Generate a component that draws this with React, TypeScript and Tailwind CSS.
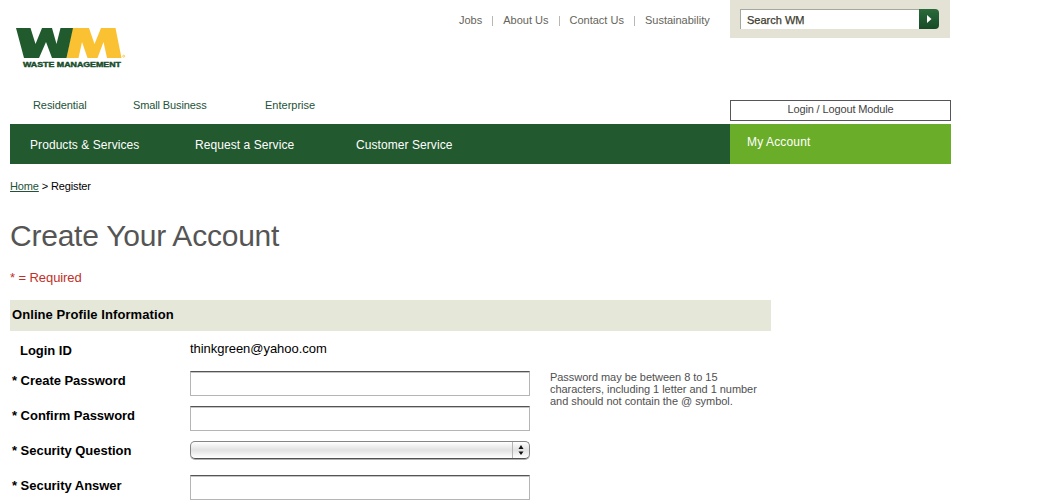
import type { ReactNode } from 'react';

function Logo() {
  return (
    <svg width="112" height="42" viewBox="0 0 112 42" role="img" aria-label="Waste Management">
      <path d="M57.5 0H74L79.5 16L86 0H100.5L106.5 30H92L88.5 14L82.5 30H72.5L67 14L63.5 30H51.5Z" fill="#fac232" />
      <path d="M1 0H15.5L20.5 16L27 0H37L41.500 16L45.500 0H58L51.500 30H37L31 14L24 30H9Z" fill="#205a2d" />
      <circle cx="108.700" cy="28.200" r="1" fill="none" stroke="#fac232" strokeWidth="0.8" />
      <text x="8" y="38.800" fontFamily="Liberation Sans, sans-serif" fontSize="6.8" fontWeight="700" textLength="98" lengthAdjust="spacingAndGlyphs" fill="#174d2b" stroke="#174d2b" strokeWidth="0.4">WASTE MANAGEMENT</text>
    </svg>
  );
}

function Field({ label, indent = 'pl-[2px]', height = 'h-[35px]', children }: { label: string; indent?: string; height?: string; children: ReactNode }) {
  return (
    <div className={`flex items-start ${height}`}>
      <label className={`w-[180px] shrink-0 whitespace-nowrap pt-[2px] text-[13px] font-bold leading-[15px] tracking-[-0.03px] ${indent}`}>{label}</label>
      {children}
    </div>
  );
}

const input =
  'h-[25px] w-[340px] border border-[#b5b5b5] border-t-[#555] bg-white px-1 text-[13px] shadow-[inset_0_1px_0_#c4c4c4] outline-none';

export default function App() {
  return (
    <div className="h-[502px] w-[1059px] overflow-hidden bg-white pl-[10px] font-['Liberation_Sans',Arial,sans-serif] text-black">
      <header className="w-[941px]">
        <div className="flex h-[99px] items-start">
          <div className="w-[449px] pl-[5px] pt-[28px]"><Logo /></div>
          <nav className="flex w-[271px] items-center pt-[14px] text-[11px] leading-[13px] text-[#65645a]">
            <span>Jobs</span>
            <i className="ml-[10px] mr-[10px] h-[10px] w-px bg-[#b8b8b0]" />
            <span>About Us</span>
            <i className="ml-[10px] mr-[10px] h-[10px] w-px bg-[#b8b8b0]" />
            <span>Contact Us</span>
            <i className="ml-[10px] mr-[10px] h-[10px] w-px bg-[#b8b8b0]" />
            <span>Sustainability</span>
          </nav>
          <div className="flex h-[38px] w-[220px] items-start bg-[#e4e1d5] pl-[10px] pt-[9px]">
            <div className="h-[20px] w-[179px] border-l border-t border-[#a5a89e] bg-white pl-[6px] text-[11px] leading-[21px] text-[#3d3c2c] [-webkit-text-stroke:0.25px_#3d3c2c]">Search WM</div>
            <button type="button" aria-label="Search" className="flex h-[20px] w-[20px] items-center justify-center rounded-r-[4px] bg-linear-to-b from-[#2a6b3b] to-[#164a27]">
              <svg width="5" height="8" viewBox="0 0 5 8"><path d="M0 0L4.5 4L0 8Z" fill="#fff" /></svg>
            </button>
          </div>
        </div>
        <div className="flex h-[25px] items-start text-[11px] leading-[13px] text-[#235337]">
          <span className="w-[100px] whitespace-nowrap pl-[23px] tracking-[-0.08px]">Residential</span>
          <span className="w-[132px] whitespace-nowrap pl-[23px] tracking-[-0.12px]">Small Business</span>
          <span className="w-[488px] pl-[23px]">Enterprise</span>
          <div className="mt-px h-[21px] w-[221px] border border-[#55555a] text-center text-[11px] leading-[17px] tracking-[-0.13px] text-[#444]">Login / Logout Module</div>
        </div>
        <nav className="flex h-[40px] bg-[#22592e] text-[12px] leading-[42px] tracking-[0.07px] text-white">
          <span className="w-[185px] pl-[20px]">Products &amp; Services</span>
          <span className="w-[161px]">Request a Service</span>
          <span className="w-[374px]">Customer Service</span>
          <span className="w-[221px] bg-[#6aad29] pl-[17px] leading-[36px] tracking-[0.14px]">My Account</span>
        </nav>
      </header>
      <main className="w-[761px]">
        <div className="h-[55px] pt-[16px] text-[11px] leading-[13px] tracking-[-0.13px]">
          <a className="text-[#235337] underline">Home</a> &gt; Register
        </div>
        <h1 className="h-[51px] text-[30px] leading-[34px] tracking-[-0.23px] text-[#555]">Create Your Account</h1>
        <p className="h-[30px] text-[13px] leading-[15px] tracking-[-0.08px] text-[#c03028]">* = Required</p>
        <h2 className="h-[31px] bg-[#e5e7d9] pl-[2px] text-[13px] font-bold leading-[29px] tracking-[0.08px]">Online Profile Information</h2>
        <form className="pt-[10px]">
          <Field label="Login ID" indent="pl-[10px]" height="h-[30px]">
            <span className="text-[13px] leading-[15px] tracking-[-0.04px]">thinkgreen@yahoo.com</span>
          </Field>
          <Field label="* Create Password">
            <input className={input} />
            <p className="h-[36px] w-[230px] whitespace-pre pl-[20px] text-[11px] leading-[12px] tracking-[-0.04px] text-[#505050]">{'Password may be between 8 to 15\ncharacters, including 1 letter and 1 number\nand should not contain the @ symbol.'}</p>
          </Field>
          <Field label="* Confirm Password">
            <input className={input} />
          </Field>
          <Field label="* Security Question">
            <button type="button" className="flex h-[18px] w-[340px] justify-end rounded-[5px] border border-[#858585] border-b-[#505050] bg-linear-to-b from-white via-[#e2e2e2] to-white shadow-[0_1px_0_#b0b0b0]">
              <span className="flex h-[16px] w-[17px] items-center justify-center border-l border-[#b5b5b5]">
                <svg width="6" height="12" viewBox="0 0 6 12"><path d="M3 1L5.5 5H.5ZM3 11L.5 7.5H5.5Z" fill="#111" /></svg>
              </span>
            </button>
          </Field>
          <Field label="* Security Answer">
            <input className={`${input} -mt-px`} />
          </Field>
        </form>
      </main>
    </div>
  );
}
